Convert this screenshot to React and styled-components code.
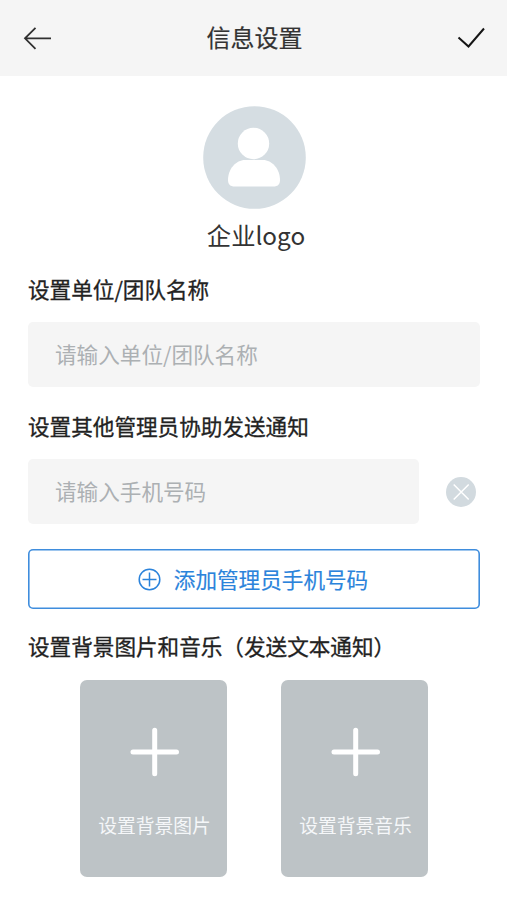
import React, {useState} from 'react';
import styled, {createGlobalStyle} from 'styled-components';

const GlobalSt = createGlobalStyle`
  * {
    box-sizing: border-box;
  }

  body {
    margin: 0;
    background-color: #fff;
    font-family: 'Noto Sans CJK SC', 'Noto Sans', sans-serif;
  }

  button,
  input {
    font-family: inherit;
  }
`;

const PageSt = styled.div`
  width: 100%;
  min-height: 900px;
  background-color: #fff;
`;

const HeaderSt = styled.header`
  display: flex;
  align-items: center;
  justify-content: space-between;
  height: 76px;
  padding: 0 21px 0 23px;
  background-color: #f5f5f5;
`;

const TitleSt = styled.h1`
  margin: 0;
  padding: 0 1px 2px 0;
  color: #333;
  font-size: 24px;
  font-weight: 400;
  line-height: 36px;
  -webkit-text-stroke: 0.2px #333;
`;

const IconButtonSt = styled.button`
  display: flex;
  padding: 0;
  border: none;
  background: none;
`;

const ContentSt = styled.main`
  padding: 30px 27px 0 28px;
`;

const LogoSt = styled.div`
  display: flex;
  flex-direction: column;
  align-items: center;
  padding-left: 1px;
`;

const LogoTextSt = styled.span`
  margin-top: 8px;
  padding-left: 3px;
  color: #333;
  font-size: 24.3px;
  line-height: 36px;
`;

const LabelSt = styled.h2`
  margin: ${props => props.$top}px 0 0;
  color: #222;
  font-size: 21.6px;
  font-weight: 400;
  line-height: 32px;
  white-space: nowrap;
  -webkit-text-stroke: 0.3px #222;
`;

const FieldRowSt = styled.div`
  display: flex;
  align-items: center;
  gap: 27px;
  margin-top: 17px;
  padding-right: ${props => (props.$removable ? '4px' : '0')};
`;

const InputSt = styled.input`
  flex: 1;
  min-width: 0;
  height: 65px;
  padding: 0 27px 2px;
  border: none;
  border-radius: 5px;
  outline: none;
  background-color: #f5f5f5;
  color: #333;
  font-size: 21.6px;

  &::placeholder {
    color: #acb0b3;
    opacity: 1;
  }
`;

const AddButtonSt = styled.button`
  display: flex;
  align-items: center;
  justify-content: center;
  gap: 13px;
  width: 100%;
  height: 60px;
  margin-top: 25px;
  padding: 0 2px 0 0;
  border: none;
  border-radius: 5px;
  box-shadow: inset 0 0 0 1.6px #3f8ddd;
  background-color: #fff;
  color: #2b83db;
  font-size: 21.6px;
  line-height: 32px;
  -webkit-text-stroke: 0.15px #2b83db;
`;

const CardsSt = styled.div`
  display: flex;
  gap: 54px;
  margin-top: 18px;
  padding-left: 52px;
`;

const CardSt = styled.button`
  display: flex;
  flex-direction: column;
  align-items: center;
  width: 147px;
  height: 197px;
  padding: 47px 0 0 2px;
  border: none;
  border-radius: 7px;
  background-color: #bdc3c6;
  color: #f5f7f9;
  font-size: 18.8px;
  line-height: 28px;
  white-space: nowrap;
`;

const CardTextSt = styled.span`
  margin-top: 34px;
`;

const BackIcon = () => (
  <svg width="30" height="26" viewBox="0 0 30 26" fill="none">
    <path
      d="M12.5 2.8L2 13.300l10.500 10.500M2 13.300h26"
      stroke="#303030"
      strokeWidth="1.8"
    />
  </svg>
);

const CheckIcon = () => (
  <svg width="29" height="24" viewBox="0 0 29 24" fill="none">
    <path d="M1.500 11.500l10 9L27 2.500" stroke="#151515" strokeWidth="2" />
  </svg>
);

const AvatarIcon = () => (
  <svg width="103" height="103" viewBox="0 0 103 103">
    <circle cx="51.5" cy="51.5" r="51.3" fill="#d5dde2" />
    <circle cx="50.5" cy="37.5" r="15.7" fill="#fff" />
    <path
      d="M42 54h18c9 0 17 9 17 20 0 4.500-2.500 6.500-6.500 6.500h-39c-4 0-6.500-2-6.500-6.500C25 63 33 54 42 54z"
      fill="#fff"
    />
  </svg>
);

const RemoveIcon = () => (
  <svg width="30" height="30" viewBox="0 0 30 30">
    <circle cx="15" cy="15" r="15" fill="#d2dadf" />
    <path d="M7.700 7.500l15 15M22.700 7.500l-15 15" stroke="#fff" strokeWidth="1.500" />
  </svg>
);

const CirclePlusIcon = () => (
  <svg width="23" height="23" viewBox="0 0 23 23" fill="none">
    <g stroke="#2b83db" strokeWidth="1.500">
      <circle cx="11.500" cy="11.500" r="10.300" />
      <path d="M11.500 4.500v14M4.500 11.500h14" />
    </g>
  </svg>
);

const PlusIcon = () => (
  <svg width="50" height="50" viewBox="0 0 50 50">
    <path
      d="M24.700 3.200v43.500M3 25h43.500"
      stroke="#fff"
      strokeWidth="5"
      strokeLinecap="round"
    />
  </svg>
);

const uploads = ['设置背景图片', '设置背景音乐'];

const App = () => {
  const [name, setName] = useState('');
  const [phone, setPhone] = useState('');

  return (
    <PageSt>
      <GlobalSt />
      <HeaderSt>
        <IconButtonSt>
          <BackIcon />
        </IconButtonSt>
        <TitleSt>信息设置</TitleSt>
        <IconButtonSt>
          <CheckIcon />
        </IconButtonSt>
      </HeaderSt>
      <ContentSt>
        <LogoSt>
          <AvatarIcon />
          <LogoTextSt>企业logo</LogoTextSt>
        </LogoSt>

        <LabelSt $top={20}>设置单位/团队名称</LabelSt>
        <FieldRowSt>
          <InputSt
            value={name}
            placeholder="请输入单位/团队名称"
            onChange={e => setName(e.target.value)}
          />
        </FieldRowSt>

        <LabelSt $top={23}>设置其他管理员协助发送通知</LabelSt>
        <FieldRowSt $removable>
          <InputSt
            value={phone}
            placeholder="请输入手机号码"
            onChange={e => setPhone(e.target.value)}
          />
          <IconButtonSt onClick={() => setPhone('')}>
            <RemoveIcon />
          </IconButtonSt>
        </FieldRowSt>

        <AddButtonSt>
          <CirclePlusIcon />
          添加管理员手机号码
        </AddButtonSt>

        <LabelSt $top={21}>设置背景图片和音乐（发送文本通知）</LabelSt>
        <CardsSt>
          {uploads.map(text => (
            <CardSt key={text}>
              <PlusIcon />
              <CardTextSt>{text}</CardTextSt>
            </CardSt>
          ))}
        </CardsSt>
      </ContentSt>
    </PageSt>
  );
};

export default App;
